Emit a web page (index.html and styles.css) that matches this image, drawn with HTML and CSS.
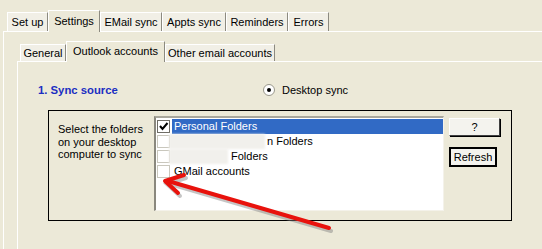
FILE: index.html
```html
<!DOCTYPE html>
<html>
<head>
  <title>Settings</title>
  <link rel="stylesheet" href="styles.css">
</head>
<body>

  <div class="tabs outer-tabs">
    <div class="tab">Set up</div>
    <div class="tab active">Settings</div>
    <div class="tab">EMail sync</div>
    <div class="tab">Appts sync</div>
    <div class="tab">Reminders</div>
    <div class="tab">Errors</div>
  </div>

  <div class="panel outer-panel">
    <div class="tabs inner-tabs">
      <div class="tab">General</div>
      <div class="tab active">Outlook accounts</div>
      <div class="tab">Other email accounts</div>
    </div>

    <div class="panel inner-panel">
      <div class="source-row">
        <h3 class="section-title">1. Sync source</h3>
        <label class="radio-label"><span class="radio"><span class="dot"></span></span>Desktop sync</label>
      </div>

      <div class="group-box">
        <p class="hint">Select the folders<br>on your desktop<br>computer to sync</p>

        <div class="listbox">
          <div class="item selected">
            <span class="check checked">
              <svg width="11" height="11" viewBox="0 0 11 11"><path d="M2 5 L4.5 8 L9.5 2" fill="none" stroke="#000" stroke-width="2"/></svg>
            </span>
            <span class="label">Personal Folders</span>
          </div>
          <div class="item">
            <span class="check"></span>
            <span class="redacted wide"></span>
            <span class="label">n Folders</span>
          </div>
          <div class="item">
            <span class="check"></span>
            <span class="redacted narrow"></span>
            <span class="label">Folders</span>
          </div>
          <div class="item">
            <span class="check"></span>
            <span class="label">GMail accounts</span>
          </div>
        </div>

        <div class="buttons">
          <button class="btn">?</button>
          <button class="btn default">Refresh</button>
        </div>
      </div>
    </div>
  </div>

  <!-- red annotation arrow -->
  <svg class="arrow" width="542" height="249" viewBox="0 0 542 249">
    <g stroke="#808080" stroke-width="4" stroke-linecap="round" fill="none" opacity="0.45" transform="translate(2,3)">
      <path d="M329 228 L168 181"/>
      <path d="M184 175 L165 181 L178 193"/>
    </g>
    <g stroke="#e8120c" stroke-width="4" stroke-linecap="round" stroke-linejoin="round" fill="none">
      <path d="M329 228 L168 181"/>
      <path d="M184 175 L165 181 L178 193"/>
    </g>
  </svg>

</body>
</html>
```

FILE: styles.css
```css
* {
  box-sizing: border-box;
}

body {
  font-family: "Liberation Sans", Arial, sans-serif;
  font-size: 11px;
  background-color: #ece9d8;
  color: #000;
  margin: 0;
  padding: 0;
  position: relative;
  height: 249px;
  overflow: hidden;
}

.tabs {
  display: flex;
  align-items: flex-end;
}

.tab {
  display: flex;
  align-items: center;
  justify-content: center;
  border-top: 1px solid #fff;
  border-left: 1px solid #fff;
  border-right: 1px solid #8c8a80;
  background-color: #f1efe6;
  white-space: nowrap;
}

.tab.active {
  background-color: #ece9d8;
  margin-bottom: -1px;
  padding-bottom: 2px;
  position: relative;
  z-index: 1;
}

/* outer tab strip */
.outer-tabs {
  margin-top: 10px;
  padding-left: 7px;
  height: 21px;
}

.outer-tabs .tab { height: 19px; }
.outer-tabs .tab.active { height: 22px; }

.outer-tabs .tab:nth-child(1) { width: 41px; }
.outer-tabs .tab:nth-child(2) { width: 52px; }
.outer-tabs .tab:nth-child(3) { width: 62px; }
.outer-tabs .tab:nth-child(4) { width: 64px; }
.outer-tabs .tab:nth-child(5) { width: 62px; }
.outer-tabs .tab:nth-child(6) { width: 41px; }

.panel {
  border-top: 1px solid #fff;
  border-left: 1px solid #fff;
}

.outer-panel {
  margin-left: 3px;
  padding-left: 13px;
  padding-top: 8px;
  height: 218px;
}

/* inner tab strip */
.inner-tabs {
  padding-left: 3px;
  height: 21px;
}

.inner-tabs .tab { height: 17px; }
.inner-tabs .tab.active { height: 21px; }

.inner-tabs .tab:nth-child(1) { width: 46px; }
.inner-tabs .tab:nth-child(2) { width: 99px; }
.inner-tabs .tab:nth-child(3) { width: 110px; }

.inner-panel {
  padding: 16px 0 0 20px;
  height: 188px;
}

.source-row {
  display: flex;
  align-items: center;
  height: 24px;
}

.section-title {
  margin: 0;
  font-size: 11.3px;
  font-weight: bold;
  color: #1b2ec2;
  width: 225px;
}

.radio-label {
  display: flex;
  align-items: center;
  gap: 7px;
}

.radio {
  width: 12px;
  height: 12px;
  border-radius: 50%;
  background-color: #fff;
  border: 1px solid #9a988c;
  display: flex;
  align-items: center;
  justify-content: center;
}

.radio .dot {
  width: 4px;
  height: 4px;
  border-radius: 50%;
  background-color: #000;
}

.group-box {
  margin: 8px 0 0 10px;
  width: 464px;
  height: 111px;
  border: 1px solid #000;
  display: flex;
  align-items: flex-start;
}

.hint {
  margin: 12px 0 0 9px;
  width: 96px;
  line-height: 12.5px;
}

.listbox {
  margin-top: 5px;
  width: 290px;
  height: 95px;
  background-color: #fff;
  border-left: 2px solid #8a887e;
  border-top: 2px solid #a9a79c;
  border-right: 1px solid #f4f2ea;
  border-bottom: 1px solid #f4f2ea;
  padding-top: 1px;
}

.item {
  display: flex;
  align-items: center;
  height: 15px;
  padding-left: 1px;
}

.check {
  width: 13px;
  height: 13px;
  border: 1px solid #c9c7bd;
  background-color: #fff;
  margin-right: 2px;
  flex-shrink: 0;
  display: flex;
  align-items: center;
  justify-content: center;
}

.check.checked {
  border-color: #6f6d66;
}

.item .label {
  padding: 0 2px;
  height: 15px;
  line-height: 15px;
}

.item.selected .label {
  background-color: #316ac5;
  color: #fff;
  flex: 1;
}

.redacted {
  height: 15px;
  margin-left: -3px;
  background-color: #f1f0ec;
  filter: blur(1px);
  flex-shrink: 0;
}

.redacted.wide { width: 96px; }
.redacted.narrow { width: 59px; margin-right: 1px; }

.buttons {
  margin: 7px 0 0 5px;
  display: flex;
  flex-direction: column;
  gap: 11px;
}

.btn {
  font-family: "Liberation Sans", Arial, sans-serif;
  font-size: 11px;
  height: 18px;
  padding: 0;
  background-color: #f4f3ee;
  border: 1px solid;
  border-color: #fff #404040 #404040 #fff;
  box-shadow: 1px 1px 0 #000;
  width: 51px;
  text-align: center;
}

.btn.default {
  width: 48px;
  height: 20px;
  border: 2px solid #000;
  box-shadow: none;
}

.arrow {
  position: absolute;
  left: 0;
  top: 0;
  pointer-events: none;
}
```
